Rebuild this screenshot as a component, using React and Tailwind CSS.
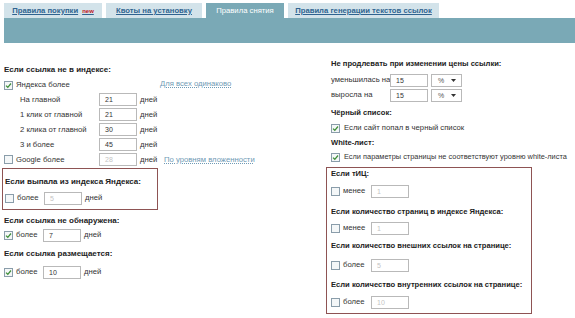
const Check = ({ on }) => (
  <span className="inline-flex items-center justify-center w-[9px] h-[9px] border border-[#8a9daa] bg-[#f4f7f8] shrink-0">
    {on && (
      <svg width="7" height="7" viewBox="0 0 7 7">
        <path d="M1 3.6 L2.8 5.3 L6 1.5" fill="none" stroke="#3f8f3a" strokeWidth="1.3" />
      </svg>
    )}
  </span>
);

const Field = ({ value, dim, className = "" }) => (
  <span
    className={`inline-flex items-center shrink-0 h-[13px] w-[38px] border border-[#b9b9b9] bg-white pl-[5px] text-[7px] ${
      dim ? "text-[#c4c4c4]" : "text-[#333]"
    } ${className}`}
  >
    {value}
  </span>
);

const Select = () => (
  <span className="inline-flex items-center justify-between shrink-0 h-[13px] w-[31px] ml-[3px] border border-[#b9b9b9] bg-white pl-[6px] pr-[5px] text-[7px] text-[#555]">
    %
    <svg width="5" height="3" viewBox="0 0 5 3">
      <path d="M0 0 H5 L2.5 3 Z" fill="#333" />
    </svg>
  </span>
);

const Head = ({ children, className = "" }) => (
  <div className={`h-[12px] flex items-center font-bold text-[#222] whitespace-nowrap text-[7.6px] ${className}`}>
    {children}
  </div>
);

const Tab = ({ children, active, className = "" }) => (
  <div
    className={`h-[15px] flex items-center justify-center whitespace-nowrap ${
      active ? "bg-[#7aa9b6] text-white" : "bg-[#d3e3ea] text-[#2f6390] underline"
    } font-bold ${className}`}
  >
    {children}
  </div>
);

const dayRows = [
  ["На главной", "21"],
  ["1 клик от главной", "21"],
  ["2 клика от главной", "30"],
  ["3 и более", "45"],
];

const boxRows = [
  { title: "Если тИЦ:", label: "менее", value: "1", ht: "mt-0", rt: "mt-[4px]" },
  { title: "Если количество страниц в индексе Яндекса:", label: "менее", value: "1", ht: "mt-[8px]", rt: "mt-[3px]" },
  { title: "Если количество внешних ссылок на странице:", label: "более", value: "5", ht: "mt-[5px]", rt: "mt-[6px]" },
  { title: "Если количество внутренних ссылок на странице:", label: "более", value: "10", ht: "mt-[7px]", rt: "mt-[4px]" },
];

export default function App() {
  return (
    <div className="w-[575px] h-[318px] bg-white overflow-hidden font-['Liberation_Sans',Arial,sans-serif] text-[7.7px] text-[#333] leading-none">
      {/* tabs */}
      <div className="flex items-end h-[18px] pl-[4px] gap-[4px]">
        <Tab className="w-[98px]">
          Правила покупки
          <span className="ml-[4px] text-[6px] text-[#c0141b] no-underline">new</span>
        </Tab>
        <Tab className="w-[96px]">Квоты на установку</Tab>
        <Tab active className="w-[78px] font-normal">Правила снятия</Tab>
        <Tab className="w-[151px]">Правила генерации текстов ссылок</Tab>
      </div>
      <div className="ml-[4px] h-[25px] bg-[#7aa9b6]" />

      <div className="flex">
        {/* left column */}
        <div className="w-[326px] shrink-0 flex flex-col">
          <Head className="mt-[21px] pl-[4px] text-[8px]">Если ссылка не в индексе:</Head>
          <div className="mt-[2px] h-[14px] flex items-center pl-[4px]">
            <Check on />
            <span className="ml-[3px] w-[144px]">Яндекса более</span>
            <span className="-mt-[3px] text-[#6f9ab5] underline decoration-dotted">Для всех одинаково</span>
          </div>
          {dayRows.map(([label, v]) => (
            <div key={label} className="h-[15px] flex items-center">
              <span className="w-[99px] pl-[20px]">{label}</span>
              <Field value={v} />
              <span className="ml-[3px]">дней</span>
            </div>
          ))}
          <div className="h-[15px] flex items-center pl-[4px]">
            <Check />
            <span className="ml-[3px] w-[83px]">Google более</span>
            <Field value="28" dim />
            <span className="ml-[3px] w-[24px]">дней</span>
            <span className="text-[#6f9ab5] underline decoration-dotted">По уровням вложенности</span>
          </div>

          <div className="mt-[1px] ml-[2px] w-[156px] border border-[#8e5353] pt-[7px] pb-[4px] pl-[1px]">
            <Head className="pl-[1px] text-[8px]">Если выпала из индекса Яндекса:</Head>
            <div className="mt-[3px] h-[14px] flex items-center pl-[1px]">
              <Check />
              <span className="ml-[3px] w-[27px]">более</span>
              <Field value="5" dim />
              <span className="ml-[3px]">дней</span>
            </div>
          </div>

          <Head className="mt-[5px] pl-[4px] text-[8px]">Если ссылка не обнаружена:</Head>
          <div className="mt-[1px] h-[14px] flex items-center pl-[4px]">
            <Check on />
            <span className="ml-[3px] w-[27px]">более</span>
            <Field value="7" />
            <span className="ml-[3px]">дней</span>
          </div>

          <Head className="mt-[6px] pl-[4px] text-[8px]">Если ссылка размещается:</Head>
          <div className="mt-[5px] h-[14px] flex items-center pl-[4px]">
            <Check on />
            <span className="ml-[3px] w-[27px]">более</span>
            <Field value="10" />
            <span className="ml-[3px]">дней</span>
          </div>
        </div>

        {/* right column */}
        <div className="flex-1 min-w-0 flex flex-col">
          <Head className="mt-[15px] pl-[5px]">Не продлевать при изменении цены ссылки:</Head>
          <div className="mt-[3px] h-[14px] flex items-center pl-[5px] whitespace-nowrap">
            <span className="w-[59px] shrink-0">уменьшилась на</span>
            <Field value="15" />
            <Select />
          </div>
          <div className="mt-[1px] h-[14px] flex items-center pl-[5px] whitespace-nowrap">
            <span className="w-[59px] shrink-0">выросла на</span>
            <Field value="15" />
            <Select />
          </div>
          <Head className="mt-[5px] pl-[5px]">Чёрный список:</Head>
          <div className="mt-[2px] h-[14px] flex items-center pl-[5px]">
            <Check on />
            <span className="ml-[4px]">Если сайт попал в черный список</span>
          </div>
          <Head className="mt-[2px] pl-[5px]">White-лист:</Head>
          <div className="mt-[1px] h-[14px] flex items-center pl-[5px] whitespace-nowrap text-[7.4px]">
            <Check on />
            <span className="ml-[4px]">Если параметры страницы не соответствуют уровню white-листа</span>
          </div>

          <div className="mt-[3px] w-[206px] border border-[#8e5353] pb-[4px] pl-[4px] flex flex-col">
            {boxRows.map((r) => (
              <div key={r.title} className="flex flex-col">
                <Head className={r.ht}>{r.title}</Head>
                <div className={`${r.rt} h-[14px] flex items-center`}>
                  <Check />
                  <span className="ml-[3px] w-[28px]">{r.label}</span>
                  <Field value={r.value} dim />
                </div>
              </div>
            ))}
          </div>
        </div>
      </div>
    </div>
  );
}
